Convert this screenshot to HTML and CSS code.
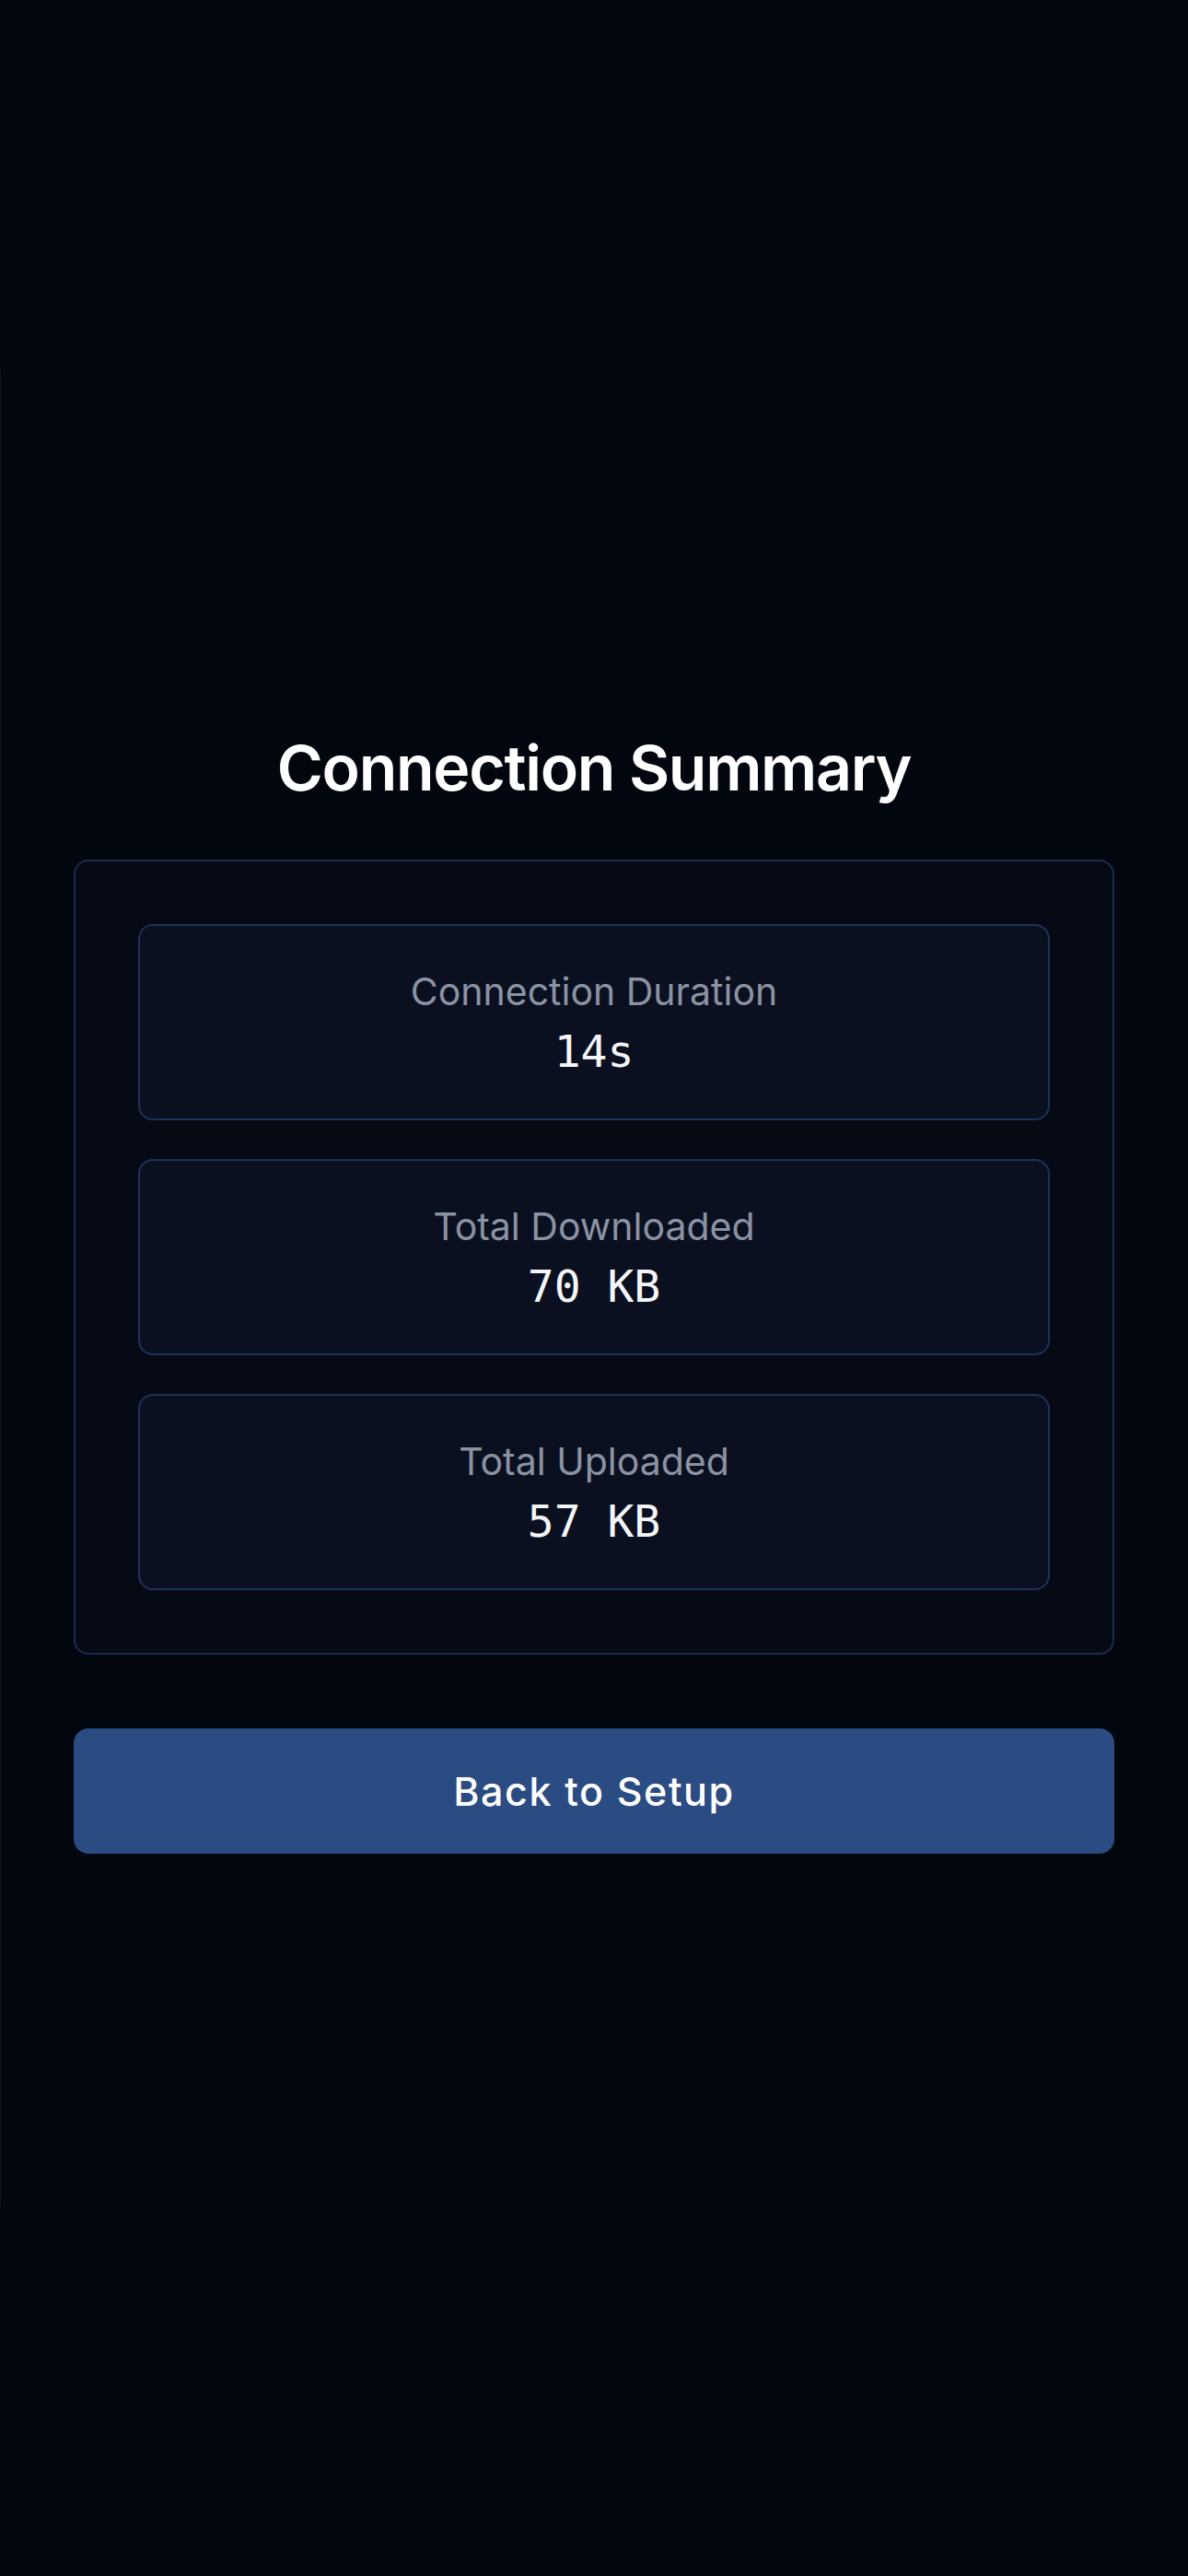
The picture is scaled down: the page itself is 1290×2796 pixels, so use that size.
FILE: index.html
```html
<!DOCTYPE html>
<html lang="en">
<head>
<meta charset="utf-8">
<title>Connection Summary</title>
<link rel="stylesheet" href="styles.css">
</head>
<body>
  <main class="sheet">
    <h1 class="title">Connection Summary</h1>
    <section class="summary">
      <div class="stat">
        <div class="stat-label">Connection Duration</div>
        <div class="stat-value">14s</div>
      </div>
      <div class="stat">
        <div class="stat-label">Total Downloaded</div>
        <div class="stat-value">70 KB</div>
      </div>
      <div class="stat">
        <div class="stat-label">Total Uploaded</div>
        <div class="stat-value">57 KB</div>
      </div>
    </section>
    <button class="back-btn" type="button">Back to Setup</button>
  </main>
</body>
</html>
```

FILE: styles.css
```css
* {
  box-sizing: border-box;
}

html, body {
  margin: 0;
  padding: 0;
  background: #02060f;
}

body {
  width: 1290px;
  height: 2796px;
  padding-top: 400px;
  font-family: Inter, "Noto Sans", "Liberation Sans", sans-serif;
  color: #ffffff;
}

.sheet {
  height: 1996px;
  border-left: 1px solid #0c111b;
  padding: 393px 80px 0 79px;
  display: flex;
  flex-direction: column;
}

.title {
  margin: 0 0 60px;
  font-size: 68px;
  line-height: 80px;
  font-weight: 600;
  text-align: center;
  letter-spacing: -1.3px;
  color: #ffffff;
}

.summary {
  background: #050a15;
  border: 2px solid #1c2b4d;
  border-radius: 16px;
  padding: 68px;
  display: flex;
  flex-direction: column;
  gap: 42px;
}

.stat {
  height: 213px;
  background: #0a1020;
  border: 2px solid #1f3159;
  border-radius: 16px;
  display: flex;
  flex-direction: column;
  align-items: center;
  justify-content: center;
  gap: 12px;
}

.stat-label {
  font-size: 41px;
  line-height: 50px;
  font-weight: 400;
  color: #8b93a3;
}

.stat-value {
  font-family: "DejaVu Sans Mono", "Liberation Mono", monospace;
  font-size: 48px;
  line-height: 56px;
  color: #f4f6fa;
}

.back-btn {
  margin-top: 80px;
  height: 136px;
  width: 100%;
  border: none;
  border-radius: 16px;
  background: #2a4c83;
  color: #ffffff;
  font-family: Inter, "Noto Sans", "Liberation Sans", sans-serif;
  font-size: 43px;
  font-weight: 500;
  letter-spacing: 1.6px;
  display: flex;
  align-items: center;
  justify-content: center;
  padding: 0;
}
```
